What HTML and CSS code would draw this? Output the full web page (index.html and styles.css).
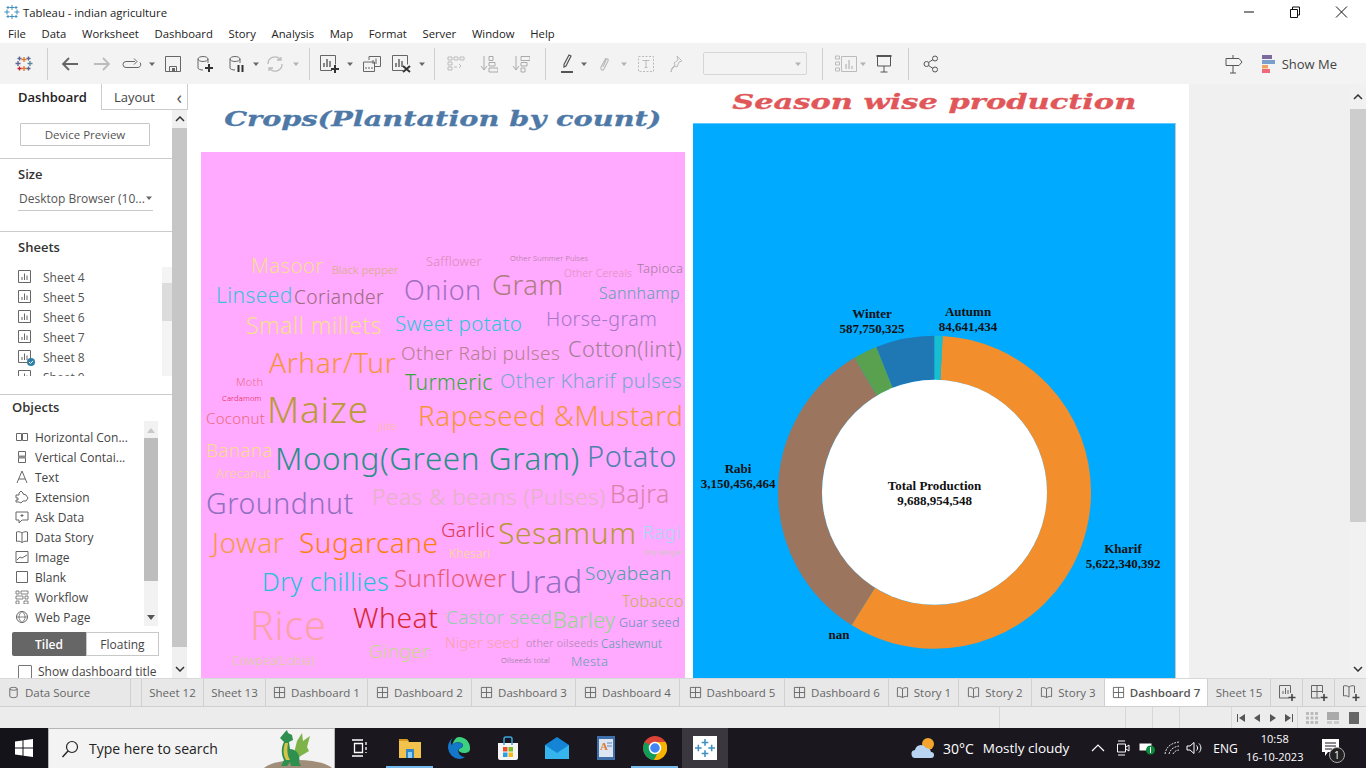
FILE: index.html
```html
<!DOCTYPE html>
<html lang="en">
<head>
    <meta charset="UTF-8">
    <title>Tableau - indian agriculture</title>
    <link rel="stylesheet" href="styles.css">
</head>
<body>
<svg class="sprite">
    <symbol id="i-sheet" viewBox="0 0 14 14"><path d="M.5.5h12v12H.5zM4 10V7M6.5 10V3.5M9 10V5.5" fill="none" stroke="#666"/></symbol>
    <symbol id="i-dash" viewBox="0 0 14 14"><path d="M1.5 1.5h11v11h-11zM7 1.5v11M1.5 7h11" fill="none" stroke="#666"/></symbol>
    <symbol id="i-story" viewBox="0 0 14 14"><path d="M7 3C5 1.500 3 1.500 1.500 2v9.500c1.500-.5 3.500-.5 5.500 1 2-1.500 4-1.500 5.500-1V2C11 1.500 9 1.500 7 3zM7 3v9.500" fill="none" stroke="#666"/></symbol>
    <symbol id="i-caret" viewBox="0 0 8 8"><path d="M1 2.500h6L4 6z" fill="#666"/></symbol>
    <symbol id="i-up" viewBox="0 0 10 6"><path d="M1 5l4-4 4 4" fill="none" stroke="#333" stroke-width="1.500"/></symbol>
    <symbol id="i-down" viewBox="0 0 10 6"><path d="M1 1l4 4 4-4" fill="none" stroke="#333" stroke-width="1.500"/></symbol>
</svg>

<div class="titlebar">
    <svg class="app-icon" viewBox="0 0 16 16"><path d="M8 1v5M5.500 3.500h5M8 10v5M5.500 12.500h5M3 5.500v5M.5 8h5M13 5.500v5M10.500 8h5M4 2v3M2.500 3.500h3M12 2v3M10.500 3.500h3M4 11v3M2.500 12.500h3M12 11v3M10.500 12.500h3" stroke="#3f8fc0" fill="none"/></svg>
    <span class="app-title">Tableau - indian agriculture</span>
    <div class="win-controls">
        <svg viewBox="0 0 46 24"><path d="M18 12h10" stroke="#111"/></svg>
        <svg viewBox="0 0 46 24"><path d="M18.500 9.500h7v8h-7zM20.500 9.500v-2.500h7v8h-2" fill="none" stroke="#111"/></svg>
        <svg viewBox="0 0 46 24"><path d="M18 6.500l11 11M29 6.500l-11 11" stroke="#111" fill="none"/></svg>
    </div>
</div>

<nav class="menubar">
    <span>File</span><span>Data</span><span>Worksheet</span><span>Dashboard</span><span>Story</span><span>Analysis</span><span>Map</span><span>Format</span><span>Server</span><span>Window</span><span>Help</span>
</nav>

<div class="toolbar">
    <div class="tool t47"><svg width="18" height="18" viewBox="0 0 18 18"><path d="M9 2v5M6.500 4.500h5M9 11v5M6.500 13.500h5" stroke="#e8762c" fill="none" stroke-width="1.300"/><path d="M3 6v5M.5 8.500h5" stroke="#5b6591" fill="none" stroke-width="1.300"/><path d="M15 6v5M12.500 8.500h5" stroke="#59879b" fill="none" stroke-width="1.300"/><path d="M4.500 11.500v4M2.500 13.500h4" stroke="#c72035" fill="none" stroke-width="1.300"/><path d="M13.500 11.500v4M11.500 13.500h4M4.500 1.500v4M2.500 3.500h4M13.500 1.500v4M11.500 3.500h4" stroke="#5b6591" fill="none" stroke-width="1.300"/></svg></div>
    <div class="sep"></div>
    <div class="t6"></div>
    <div class="tool t32"><svg width="18" height="14" viewBox="0 0 18 14"><path d="M17 7H2M8 1L2 7l6 6" fill="none" stroke="#666" stroke-width="1.800"/></svg></div>
    <div class="tool t32"><svg width="18" height="14" viewBox="0 0 18 14"><path d="M1 7h15M10 1l6 6-6 6" fill="none" stroke="#bbb" stroke-width="1.800"/></svg></div>
    <div class="tool t28"><svg width="20" height="12" viewBox="0 0 20 12"><path d="M13 3.500H4a3 3 0 0 0 0 6h12a3 3 0 0 0 2-5M12 .5l3 3-3 3" fill="none" stroke="#666"/></svg></div>
    <div class="tool t12"><svg class="caret"><use href="#i-caret"/></svg></div>
    <div class="tool t30"><svg width="16" height="16" viewBox="0 0 16 16"><path d="M.5.5h15v15H.5zM4.500 15.500v-5h7v5" fill="none" stroke="#666"/><path d="M7 12h3v3H7z" fill="#666"/></svg></div>
    <div class="tool t34"><svg width="18" height="18" viewBox="0 0 18 18"><path d="M2 4v9c0 1 2 2 5 2M2 4c0-1.500 2.500-2.500 5-2.500S12 2.500 12 4s-2.500 2.500-5 2.500S2 5.500 2 4zM12 4v4" fill="none" stroke="#666"/><path d="M13 9v8M9 13h8" stroke="#333" stroke-width="2"/></svg></div>
    <div class="tool t30"><svg width="18" height="18" viewBox="0 0 18 18"><path d="M2 4v9c0 1 2 2 5 2M2 4c0-1.500 2.500-2.500 5-2.500S12 2.500 12 4s-2.500 2.500-5 2.500S2 5.500 2 4zM12 4v4" fill="none" stroke="#666"/><path d="M10.500 10v7M14.500 10v7" stroke="#333" stroke-width="2"/></svg></div>
    <div class="tool t8"><svg class="caret"><use href="#i-caret"/></svg></div>
    <div class="tool t30"><svg width="18" height="16" viewBox="0 0 18 16"><path d="M2 8a7 7 0 0 1 12-5M16 8A7 7 0 0 1 4 13M11 4h4V1M7 12H3v3" fill="none" stroke="#bbb" stroke-width="1.300"/></svg></div>
    <div class="tool t12"><svg class="caret faded"><use href="#i-caret"/></svg></div>
    <div class="t7"></div>
    <div class="sep"></div>
    <div class="t4"></div>
    <div class="tool t32"><svg width="20" height="18" viewBox="0 0 20 18"><path d="M12 15.500H.5V.5h15v9" fill="none" stroke="#666"/><path d="M4 12V8M7 12V4M10 12V6" stroke="#666" stroke-width="1.500"/><path d="M15 10v8M11 14h8" stroke="#333" stroke-width="2"/></svg></div>
    <div class="tool t8"><svg class="caret"><use href="#i-caret"/></svg></div>
    <div class="tool t36"><svg width="18" height="16" viewBox="0 0 18 16"><path d="M6 4V.5h11.500v10H12M.5 6h11v9.500H.5zM10 8V4M13 8V2.500M3 13v-2M6 13v-2M9 13v-2" fill="none" stroke="#666"/></svg></div>
    <div class="tool t24"><svg width="20" height="18" viewBox="0 0 20 18"><path d="M11 15.500H.5V.5h15v9" fill="none" stroke="#666"/><path d="M4 12V8M7 12V4M10 12V6" stroke="#666" stroke-width="1.500"/><path d="M11 11l7 6M18 11l-7 6" stroke="#333" stroke-width="2"/></svg></div>
    <div class="tool t16"><svg class="caret"><use href="#i-caret"/></svg></div>
    <div class="t4"></div>
    <div class="sep"></div>
    <div class="tool t42"><svg width="18" height="16" viewBox="0 0 18 16"><path d="M1 1h4v3H1zM7 1h4v3H7zM13 1h4v3h-4zM1 6h4v3H1zM1 11h4v3H1zM7 11h3M12 8l2 2-2 2" fill="none" stroke="#bbb"/></svg></div>
    <div class="tool t24"><svg width="18" height="18" viewBox="0 0 18 18"><path d="M4 1v13M1 11l3 4 3-4" fill="none" stroke="#aaa"/><path d="M9 1.500h4v4H9zM9 7.500h6v3.500H9zM9 13h9v4H9z" fill="none" stroke="#aaa"/></svg></div>
    <div class="t4"></div>
    <div class="tool t32"><svg width="18" height="18" viewBox="0 0 18 18"><path d="M4 1v13M1 11l3 4 3-4" fill="none" stroke="#aaa"/><path d="M9 1.500h9v4H9zM9 7.500h6v3.500H9zM9 13h4v4H9z" fill="none" stroke="#aaa"/></svg></div>
    <div class="t8"></div>
    <div class="sep"></div>
    <div class="t8"></div>
    <div class="tool t26"><svg width="14" height="20" viewBox="0 0 14 20"><path d="M9 1l2 1-5 10-2 1 0-2.500z" fill="none" stroke="#555" stroke-width="1.200"/><path d="M1 17h12v2H1z" fill="#555"/></svg></div>
    <div class="tool t8"><svg class="caret"><use href="#i-caret"/></svg></div>
    <div class="tool t32"><svg width="12" height="18" viewBox="0 0 12 18"><path d="M8 3L3 12c-1 3 2 4 3 2l4-8c1-2-1-3-2-1l-3 7" fill="none" stroke="#bbb" stroke-width="1.200"/></svg></div>
    <div class="tool t8"><svg class="caret faded"><use href="#i-caret"/></svg></div>
    <div class="tool t36"><svg width="16" height="16" viewBox="0 0 16 16"><path d="M.5.5h15v15H.5z" fill="none" stroke="#bbb" stroke-dasharray="2 1.500"/><path d="M4.500 4.500h7M8 4.500v7M6.500 11.500h3" fill="none" stroke="#bbb"/></svg></div>
    <div class="tool t24"><svg width="14" height="18" viewBox="0 0 14 18"><path d="M8 1l5 5-3 1-2 5-2-1-3 3-1 3 1-4 3-3-1-2 4-3z" fill="none" stroke="#bbb"/></svg></div>
    <div class="t15"></div>
    <div class="select-box"><svg class="caret faded"><use href="#i-caret"/></svg></div>
    <div class="t15"></div>
    <div class="sep"></div>
    <div class="t10"></div>
    <div class="tool t26"><svg width="22" height="18" viewBox="0 0 22 18"><path d="M.5 1h4v3h-4zM.5 7h4v3h-4zM.5 13h4v3h-4zM6.500 1.500h15v15h-15z" fill="none" stroke="#bbb"/><path d="M11 14V9M14 14V5M17 14v-3" stroke="#aaa"/></svg></div>
    <div class="tool t8"><svg class="caret faded"><use href="#i-caret"/></svg></div>
    <div class="tool t34"><svg width="18" height="18" viewBox="0 0 18 18"><path d="M1.500 1h15" stroke="#555" stroke-width="2"/><path d="M2.500 2v9h13V2M9 11v6M5.500 17h7" fill="none" stroke="#555"/></svg></div>
    <div class="t7"></div>
    <div class="sep"></div>
    <div class="tool t44"><svg width="16" height="18" viewBox="0 0 16 18"><circle cx="3.500" cy="9" r="2.500" fill="none" stroke="#555"/><circle cx="12" cy="3.500" r="2.500" fill="none" stroke="#555"/><circle cx="12" cy="14.500" r="2.500" fill="none" stroke="#555"/><path d="M5.500 7.500l4.500-3M5.500 10.500l4.500 3" stroke="#555"/></svg></div>
    <div class="toolbar-right">
        <svg width="20" height="20" viewBox="0 0 20 20"><path d="M2 4.500h13l3 3.500-3 3.500H2zM9 1v3M9 11.500V19M6 19h6" fill="none" stroke="#555"/></svg>
        <div class="showme"><svg width="13" height="18" viewBox="0 0 13 18"><path d="M0 0h10v4H0z" fill="#7b6a9b"/><path d="M0 5h13v4H0z" fill="#7a9fcf"/><path d="M0 10h6v3.500H0z" fill="#f2a25c"/><path d="M0 14h8v4H0z" fill="#ee6a7a"/></svg><span>Show Me</span></div>
    </div>
</div>

<div class="main">
    <aside class="sidebar">
        <div class="side-tabs">
            <div class="side-tab active">Dashboard</div>
            <div class="side-tab">Layout<span class="collapse">&#8249;</span></div>
        </div>
        <div class="side-body">
            <section class="device"><button class="device-btn">Device Preview</button></section>
            <section class="size">
                <h4>Size</h4>
                <div class="size-select"><span>Desktop Browser (10...</span><svg class="caret"><use href="#i-caret"/></svg></div>
            </section>
            <section class="sheets">
                <h4>Sheets</h4>
                <div class="list-wrap sheet-list">
                    <ul>
                        <li><svg class="ic"><use href="#i-sheet"/></svg>Sheet 4</li>
                        <li><svg class="ic"><use href="#i-sheet"/></svg>Sheet 5</li>
                        <li><svg class="ic"><use href="#i-sheet"/></svg>Sheet 6</li>
                        <li><svg class="ic"><use href="#i-sheet"/></svg>Sheet 7</li>
                        <li><svg class="ic"><use href="#i-sheet"/></svg><svg class="check" viewBox="0 0 8 8"><circle cx="4" cy="4" r="4" fill="#2f7ea8"/><path d="M2 4l1.500 1.500L6 2.800" fill="none" stroke="#fff"/></svg>Sheet 8</li>
                        <li><svg class="ic"><use href="#i-sheet"/></svg>Sheet 9</li>
                    </ul>
                    <div class="mini-scroll"><div class="mini-thumb"></div></div>
                </div>
            </section>
            <section class="objects">
                <h4>Objects</h4>
                <div class="object-list">
                    <ul>
                        <li><svg class="ob" viewBox="0 0 14 14"><path d="M1.500 3.500h5v7h-5zM7.500 3.500h5v7h-5z" fill="none" stroke="#666"/></svg>Horizontal Con...</li>
                        <li><svg class="ob" viewBox="0 0 14 14"><path d="M3.500 1.500h7v5h-7zM3.500 7.500h7v5h-7z" fill="none" stroke="#666"/><path d="M3.500 5.500h7v3h-7z" fill="#888"/></svg>Vertical Contai...</li>
                        <li><svg class="ob" viewBox="0 0 14 14"><path d="M2 13L7 1l5 12M4 9h6" fill="none" stroke="#666"/></svg>Text</li>
                        <li><svg class="ob" viewBox="0 0 14 14"><path d="M1 5h3V3l2-2 2 2v1l3 1 2 3-2 3H8l-2 2-2-1H1v-2h2V8H1z" fill="none" stroke="#666"/></svg>Extension</li>
                        <li><svg class="ob" viewBox="0 0 14 14"><path d="M1 2h12v8H7l-3 3v-3H1zM7 4v3M5.500 5.500h3" fill="none" stroke="#666"/></svg>Ask Data</li>
                        <li><svg class="ob" viewBox="0 0 14 14"><use href="#i-story"/></svg>Data Story</li>
                        <li><svg class="ob" viewBox="0 0 14 14"><path d="M1 1.500h12v11H1zM2 10l3-3 2 1 5-3" fill="none" stroke="#666"/></svg>Image</li>
                        <li><svg class="ob" viewBox="0 0 14 14"><path d="M1.500 1.500h11v11h-11z" fill="none" stroke="#666"/></svg>Blank</li>
                        <li><svg class="ob" viewBox="0 0 14 14"><path d="M1 1h3v3H1zM6 1h7v3H6zM1 6h7v3H1zM10 6h3v3h-3zM1 11h3v3H1zM9 11h4v3H9z" fill="none" stroke="#666" stroke-width=".8"/></svg>Workflow</li>
                        <li><svg class="ob" viewBox="0 0 14 14"><circle cx="7" cy="7" r="5.500" fill="none" stroke="#666"/><path d="M1.500 7h11M7 1.500c-4 3-4 8 0 11M7 1.500c4 3 4 8 0 11" fill="none" stroke="#666" stroke-width=".8"/></svg>Web Page</li>
                    </ul>
                    <div class="ob-scroll"><span class="ob-up"></span><div class="ob-thumb"></div><span class="ob-down"></span></div>
                </div>
                <div class="tile-toggle"><span class="tiled">Tiled</span><span class="floating">Floating</span></div>
                <label class="show-title"><span class="box"></span>Show dashboard title</label>
            </section>
        </div>
        <div class="side-scroll"><svg class="arrow"><use href="#i-up"/></svg><div class="side-thumb"></div><svg class="arrow"><use href="#i-down"/></svg></div>
    </aside>

    <div class="canvas-area">
        <div class="dashboard">
            <div class="left-col">
                <div class="title-left"><span class="wide-title">Crops(Plantation by count)</span></div>
                <div class="cloud">
                    <span class="word w-masoor">Masoor</span>
                    <span class="word w-pepper">Black pepper</span>
                    <span class="word w-safflower">Safflower</span>
                    <span class="word w-summer">Other Summer Pulses</span>
                    <span class="word w-cereals">Other Cereals</span>
                    <span class="word w-tapioca">Tapioca</span>
                    <span class="word w-linseed">Linseed</span>
                    <span class="word w-coriander">Coriander</span>
                    <span class="word w-onion">Onion</span>
                    <span class="word w-gram">Gram</span>
                    <span class="word w-sannhamp">Sannhamp</span>
                    <span class="word w-millets">Small millets</span>
                    <span class="word w-sweet">Sweet potato</span>
                    <span class="word w-horse">Horse-gram</span>
                    <span class="word w-arhar">Arhar/Tur</span>
                    <span class="word w-rabi">Other Rabi pulses</span>
                    <span class="word w-cotton">Cotton(lint)</span>
                    <span class="word w-moth">Moth</span>
                    <span class="word w-cardamom">Cardamom</span>
                    <span class="word w-turmeric">Turmeric</span>
                    <span class="word w-kharif">Other Kharif pulses</span>
                    <span class="word w-maize">Maize</span>
                    <span class="word w-coconut">Coconut</span>
                    <span class="word w-jute">Jute</span>
                    <span class="word w-rapeseed">Rapeseed &amp;Mustard</span>
                    <span class="word w-banana">Banana</span>
                    <span class="word w-moong">Moong(Green Gram)</span>
                    <span class="word w-potato">Potato</span>
                    <span class="word w-arecanut">Arecanut</span>
                    <span class="word w-groundnut">Groundnut</span>
                    <span class="word w-peas">Peas &amp; beans (Pulses)</span>
                    <span class="word w-bajra">Bajra</span>
                    <span class="word w-garlic">Garlic</span>
                    <span class="word w-sesamum">Sesamum</span>
                    <span class="word w-ragi">Ragi</span>
                    <span class="word w-dryginger">Dry Ginger</span>
                    <span class="word w-jowar">Jowar</span>
                    <span class="word w-sugarcane">Sugarcane</span>
                    <span class="word w-khesari">Khesari</span>
                    <span class="word w-chillies">Dry chillies</span>
                    <span class="word w-sunflower">Sunflower</span>
                    <span class="word w-urad">Urad</span>
                    <span class="word w-soyabean">Soyabean</span>
                    <span class="word w-tobacco">Tobacco</span>
                    <span class="word w-rice">Rice</span>
                    <span class="word w-wheat">Wheat</span>
                    <span class="word w-castor">Castor seed</span>
                    <span class="word w-barley">Barley</span>
                    <span class="word w-guar">Guar seed</span>
                    <span class="word w-niger">Niger seed</span>
                    <span class="word w-oilseeds">other oilseeds</span>
                    <span class="word w-cashew">Cashewnut</span>
                    <span class="word w-ginger">Ginger</span>
                    <span class="word w-cowpea">Cowpea(Lobia)</span>
                    <span class="word w-oiltotal">Oilseeds total</span>
                    <span class="word w-mesta">Mesta</span>
                </div>
            </div>
            <div class="right-col">
                <div class="title-right"><span class="wide-title">Season wise production</span></div>
                <div class="donut-panel">
                    <svg class="donut" viewBox="0 0 483 554">
                        <g transform="rotate(-90 241.500 368.300)" fill="none" stroke-width="44">
                            <circle cx="241.500" cy="368.300" r="134.500" pathLength="360" stroke="#f28e2b" stroke-dasharray="209 151" stroke-dashoffset="-3"/>
                            <circle cx="241.500" cy="368.300" r="134.500" pathLength="360" stroke="#9c755f" stroke-dasharray="117.200 242.800" stroke-dashoffset="-212"/>
                            <circle cx="241.500" cy="368.300" r="134.500" pathLength="360" stroke="#59a14f" stroke-dasharray="9 351" stroke-dashoffset="-329.200"/>
                            <circle cx="241.500" cy="368.300" r="134.500" pathLength="360" stroke="#1f77b4" stroke-dasharray="21.800 338.200" stroke-dashoffset="-338.200"/>
                            <circle cx="241.500" cy="368.300" r="134.500" pathLength="360" stroke="#17becf" stroke-dasharray="3 357"/>
                        </g>
                        <circle cx="241.500" cy="368.300" r="112.500" fill="#fff"/>
                        <g class="donut-label">
                            <text x="179" y="194">Winter</text><text x="179" y="209">587,750,325</text>
                            <text x="275" y="192">Autumn</text><text x="275" y="207">84,641,434</text>
                            <text x="45" y="349">Rabi</text><text x="45" y="364">3,150,456,464</text>
                            <text x="241.500" y="366">Total Production</text><text x="241.500" y="381">9,688,954,548</text>
                            <text x="430" y="429">Kharif</text><text x="430" y="444">5,622,340,392</text>
                            <text x="146" y="515">nan</text>
                        </g>
                    </svg>
                </div>
            </div>
        </div>
        <div class="main-scroll"><svg class="arrow"><use href="#i-up"/></svg><div class="main-thumb"></div><svg class="arrow"><use href="#i-down"/></svg></div>
    </div>
</div>

<div class="tabs">
    <div class="tab tab-source"><svg class="tab-ic" viewBox="0 0 14 14"><path d="M3 3v8c0 2 8 2 8 0V3c0-2-8-2-8 0zM3 3c0 2 8 2 8 0" fill="none" stroke="#666"/></svg>Data Source</div>
    <div class="tab tab-gap"></div>
    <div class="tab w62">Sheet 12</div>
    <div class="tab w62">Sheet 13</div>
    <div class="tab w102"><svg class="tab-ic"><use href="#i-dash"/></svg>Dashboard 1</div>
    <div class="tab w104"><svg class="tab-ic"><use href="#i-dash"/></svg>Dashboard 2</div>
    <div class="tab w104"><svg class="tab-ic"><use href="#i-dash"/></svg>Dashboard 3</div>
    <div class="tab w104"><svg class="tab-ic"><use href="#i-dash"/></svg>Dashboard 4</div>
    <div class="tab w105"><svg class="tab-ic"><use href="#i-dash"/></svg>Dashboard 5</div>
    <div class="tab w104"><svg class="tab-ic"><use href="#i-dash"/></svg>Dashboard 6</div>
    <div class="tab w70"><svg class="tab-ic"><use href="#i-story"/></svg>Story 1</div>
    <div class="tab w73"><svg class="tab-ic"><use href="#i-story"/></svg>Story 2</div>
    <div class="tab w73"><svg class="tab-ic"><use href="#i-story"/></svg>Story 3</div>
    <div class="tab tab-active"><svg class="tab-ic"><use href="#i-dash"/></svg>Dashboard 7</div>
    <div class="tab w63">Sheet 15</div>
    <div class="tab w32"><svg class="add-ic" viewBox="0 0 18 18"><path d="M11 14H1.500V1.500h11V9M5 10V7M7.500 10V4M10 10V6" fill="none" stroke="#666"/><path d="M14 10v7M10.500 13.500h7" stroke="#444" stroke-width="1.600"/></svg></div>
    <div class="tab w32"><svg class="add-ic" viewBox="0 0 18 18"><path d="M10 14H1.500V1.500h11V9M7 1.500V14M1.500 7.500h11" fill="none" stroke="#666"/><path d="M14 10v7M10.500 13.500h7" stroke="#444" stroke-width="1.600"/></svg></div>
    <div class="tab wrest"><svg class="add-ic" viewBox="0 0 18 18"><path d="M7 3C5 1.500 3 1.500 1.500 2v10c1.500-.5 3.500-.5 5.500 1M7 3c2-1.500 4-1.500 5.500-1v7M7 3v10" fill="none" stroke="#666"/><path d="M14 10v7M10.500 13.500h7" stroke="#444" stroke-width="1.600"/></svg></div>
</div>

<div class="statusbar">
    <div class="st st1000"></div>
    <div class="st st126"></div>
    <div class="st st27"></div>
    <div class="st st27"></div>
    <div class="st st52"></div>
    <div class="st st66 pager">
        <svg viewBox="0 0 10 10"><path d="M1.500 1v8" stroke="#555"/><path d="M9 1v8L3 5z" fill="#555"/></svg>
        <svg viewBox="0 0 10 10"><path d="M8 1v8L2 5z" fill="#555"/></svg>
        <svg viewBox="0 0 10 10"><path d="M2 1v8l6-4z" fill="#555"/></svg>
        <svg viewBox="0 0 10 10"><path d="M8.500 1v8" stroke="#555"/><path d="M1 1v8l6-4z" fill="#555"/></svg>
    </div>
    <div class="views">
        <svg viewBox="0 0 12 12"><path d="M0 0h3v3H0zM4.500 0h3v3h-3zM9 0h3v3H9zM0 4.500h3v3H0zM4.500 4.500h3v3h-3zM9 4.500h3v3H9zM0 9h3v3H0zM4.500 9h3v3h-3zM9 9h3v3H9z" fill="#bbb"/></svg>
        <svg viewBox="0 0 12 12"><path d="M0 0h12v8H0z" fill="#aaa"/><path d="M0 9h5v3H0zM7 9h5v3H7z" fill="#ccc"/></svg>
        <svg viewBox="0 0 12 12"><path d="M1 0h10v12H1z" fill="#666"/></svg>
    </div>
</div>

<footer class="taskbar">
    <div class="start"><svg width="18" height="18" viewBox="0 0 18 18"><path d="M0 2.500l7.500-1v7H0zM8.500 1.300L18 0v8.500H8.500zM0 9.500h7.500v7l-7.500-1zM8.500 9.500H18V18l-9.500-1.300z" fill="#fff"/></svg></div>
    <div class="search">
        <svg width="18" height="18" viewBox="0 0 18 18"><circle cx="11" cy="7" r="5.500" fill="none" stroke="#222" stroke-width="1.200"/><path d="M7 11l-5.500 6" stroke="#222" stroke-width="1.400"/></svg>
        <span>Type here to search</span>
        <svg class="dragon" viewBox="0 0 74 40">
            <ellipse cx="37" cy="44" rx="37" ry="13" fill="#a08d7a"/>
            <path d="M33 24L36 12l5-8 1 8 7-5-3 11 2 4-10 6z" fill="#7db348"/>
            <path d="M19 9l5-6 2-2 1 3 4 2 1 5-4 2 1 7c6 0 11 6 9 13l2 4H30l-1-4-3 4h-6l3-6c-3-5-3-13 0-18z" fill="#2f8f4e"/>
            <path d="M24 14c-2 6-2 12 1 17h4c-3-5-3-11-2-17z" fill="#d7c24a"/>
        </svg>
    </div>
    <div class="task-icons">
        <div class="task t-view"><svg width="16" height="18" viewBox="0 0 16 18"><path d="M0 1h11M2.500 4.500h8v9h-8zM0 17h11M14 3v3M14 8v3M14 13v1" fill="none" stroke="#fff" stroke-width="1.300"/></svg></div>
        <div class="task open"><svg width="24" height="22" viewBox="0 0 24 22"><path d="M1 2h8l2 3h12v16H1z" fill="#f2c24c"/><path d="M1 2h8l2 2H1z" fill="#d99a22"/><path d="M8 12h8v9H8z" fill="#2f86c8"/><path d="M10 15h4v6h-4z" fill="#8ed0f4"/></svg></div>
        <div class="task"><svg width="24" height="24" viewBox="0 0 24 24"><path d="M12 1a11 11 0 0 1 11 12c0 3-3 4-6 4-4 0-6-2-5-4 1-1 4-1 4-4-1-3-7-4-11 0C7 4 9 1 12 1z" fill="#3dd07f"/><path d="M5 9c4-4 10-3 11 0 0 3-3 3-4 4-2 3 1 8 6 8a11 11 0 0 1-6 2A12 12 0 0 1 1 12C1 7 3 4 6 2 4 4 3 7 5 9z" fill="#1477c9"/></svg></div>
        <div class="task"><svg width="22" height="24" viewBox="0 0 22 24"><path d="M1 7h20v15a2 2 0 0 1-2 2H3a2 2 0 0 1-2-2z" fill="#f5f5f5"/><path d="M7 9V3a2 2 0 0 1 2-2h4a2 2 0 0 1 2 2v6" fill="none" stroke="#3aa7e0" stroke-width="1.500"/><path d="M6 11h4.500v4.500H6z" fill="#e8502a"/><path d="M11.500 11H16v4.500h-4.500z" fill="#7cbb28"/><path d="M6 16.500h4.500V21H6z" fill="#2c9fe0"/><path d="M11.500 16.500H16V21h-4.500z" fill="#f7b818"/></svg></div>
        <div class="task"><svg width="24" height="22" viewBox="0 0 24 22"><path d="M0 8l12-8 12 8v14H0z" fill="#1484d4"/><path d="M0 8l12 8 12-8v14H0z" fill="#35b4ee"/></svg></div>
        <div class="task"><svg width="20" height="26" viewBox="0 0 20 26"><path d="M1 1h18v24H1z" fill="#3f6fa8"/><path d="M3 4h14v18H3z" fill="#dce6f2"/><text class="doc-a" x="4" y="15">A</text><path d="M11 8h5M11 11h5" stroke="#5b86c0"/></svg></div>
        <div class="task open"><svg width="24" height="24" viewBox="0 0 24 24"><circle cx="12" cy="12" r="12" fill="#db4437"/><path d="M12 12L1.600 6 0 12a12 12 0 0 0 11 12l6-12z" fill="#0f9d58"/><path d="M12 6h10.500A12 12 0 0 1 11 24l6-12z" fill="#f4b400"/><circle cx="12" cy="12" r="5.500" fill="#4285f4" stroke="#fff" stroke-width="1.500"/></svg></div>
        <div class="task tableau"><svg width="18" height="18" viewBox="0 0 18 18"><path d="M9 1v6M6 4h6M9 11v6M6 14h6M3 6v6M0 9h6M15 6v6M12 9h6" stroke="#3f8fc0" fill="none" stroke-width="1.400"/></svg></div>
    </div>
    <div class="tray">
        <svg class="weather" width="26" height="24" viewBox="0 0 26 24"><circle cx="17" cy="8" r="6" fill="#f3a42c"/><path d="M5 22a4 4 0 0 1-1-8 6 6 0 0 1 11-2 5 5 0 0 1 5 4 3 3 0 0 1 0 6z" fill="#b8d4f0"/></svg>
        <span class="temp">30°C</span>
        <span class="cond">Mostly cloudy</span>
        <svg class="tr-up" width="14" height="8" viewBox="0 0 14 8"><path d="M1 7l6-6 6 6" fill="none" stroke="#fff" stroke-width="1.200"/></svg>
        <svg class="tr-meet" width="14" height="16" viewBox="0 0 14 16"><path d="M1.500 4h8v8h-8zM2 1h7M2 15h7M10 7l3-2v6l-3-2" fill="none" stroke="#fff"/></svg>
        <svg class="tr-bat" width="16" height="14" viewBox="0 0 16 14"><path d="M.5 2.500h12v7H.5z" fill="#fff"/><circle cx="11.500" cy="9" r="4.500" fill="#0a8a3a"/><path d="M11.500 6v6" stroke="#fff"/></svg>
        <svg class="tr-wifi" width="16" height="14" viewBox="0 0 16 14"><path d="M1 13C2 6 7 2 15 1M5 13c1-4 4-7 10-8M9 13c1-2 3-4 6-4" fill="none" stroke="#ddd" stroke-dasharray="2 1"/></svg>
        <svg class="tr-vol" width="16" height="14" viewBox="0 0 16 14"><path d="M1 5h3l4-3.500v11L4 9H1zM10.500 4.500c1.500 1.500 1.500 3.500 0 5M13 2.500c2.500 2.500 2.500 6.500 0 9" fill="none" stroke="#fff"/></svg>
        <span class="lang">ENG</span>
        <div class="clock"><span>10:58</span><span>16-10-2023</span></div>
        <div class="notif"><svg width="20" height="18" viewBox="0 0 20 18"><path d="M1 0h17v13H7l-3 4v-4H1z" fill="#fff"/><path d="M4 4h11M4 7h11M4 10h7" stroke="#1b171f"/></svg><span class="badge">1</span></div>
    </div>
</footer>
</body>
</html>
```
FILE: styles.css
```css
* {
    box-sizing: border-box;
}
html, body {
    margin: 0;
    padding: 0;
    height: 768px;
    overflow: hidden;
    background: #fff;
}
body {
    width: 1366px;
    font-family: "Open Sans", "Noto Sans", sans-serif;
    font-size: 12px;
    color: #222;
    display: flex;
    flex-direction: column;
}
.sprite {
    display: none;
}
ul {
    list-style: none;
    margin: 0;
    padding: 0;
}
h4 {
    margin: 0;
    font-size: 13px;
    font-weight: 600;
    color: #333;
}

/* title + menu */
.titlebar {
    height: 24px;
    display: flex;
    align-items: center;
    padding-left: 4px;
    flex: none;
}
.app-icon {
    width: 16px;
    height: 16px;
}
.app-title {
    margin-left: 3px;
    font-size: 11.300px;
    color: #222;
}
.win-controls {
    margin-left: auto;
    display: flex;
    margin-right: 2px;
}
.win-controls svg {
    width: 46px;
    height: 24px;
}
.menubar {
    height: 19px;
    display: flex;
    align-items: center;
    padding-left: 8px;
    gap: 15.700px;
    flex: none;
    font-size: 11.300px;
    color: #222;
}

/* toolbar */
.toolbar {
    height: 41px;
    background: #f3f3f3;
    display: flex;
    align-items: center;
    flex: none;
}
.tool {
    display: flex;
    align-items: center;
    justify-content: center;
    flex: none;
    height: 24px;
}
.sep {
    width: 1px;
    height: 32px;
    background: #cfcfcf;
    flex: none;
}
.caret {
    width: 8px;
    height: 8px;
    flex: none;
}
.faded {
    opacity: .45;
}
.t4 { width: 4px; flex: none; }
.t6 { width: 6px; flex: none; }
.t7 { width: 7px; flex: none; }
.t8 { width: 8px; flex: none; }
.t10 { width: 10px; flex: none; }
.t12 { width: 12px; flex: none; }
.t15 { width: 15px; flex: none; }
.t16 { width: 16px; }
.t24 { width: 24px; }
.t26 { width: 26px; }
.t28 { width: 28px; }
.t30 { width: 30px; }
.t32 { width: 32px; }
.t34 { width: 34px; }
.t36 { width: 36px; }
.t42 { width: 42px; }
.t44 { width: 44px; }
.t47 { width: 47px; }
.select-box {
    width: 104px;
    height: 23px;
    border: 1px solid #d6d6d6;
    border-radius: 2px;
    display: flex;
    align-items: center;
    justify-content: flex-end;
    padding-right: 4px;
    flex: none;
}
.toolbar-right {
    margin-left: auto;
    display: flex;
    align-items: center;
    gap: 18px;
    padding-right: 29px;
}
.showme {
    display: flex;
    align-items: center;
    gap: 7px;
    font-size: 13px;
    color: #444;
}

/* main */
.main {
    height: 594px;
    display: flex;
    flex: none;
    overflow: hidden;
}
.sidebar {
    width: 190px;
    flex: none;
    position: relative;
    background: #fff;
    display: flex;
    flex-wrap: wrap;
    align-content: flex-start;
    overflow: hidden;
}
.side-tabs {
    width: 188px;
    height: 26px;
    display: flex;
    flex: none;
}
.side-tab {
    display: flex;
    align-items: center;
    font-size: 13px;
    color: #444;
    height: 26px;
}
.side-tab.active {
    width: 102px;
    padding-left: 18px;
    font-weight: 600;
    color: #222;
    border-right: 1px solid #ccc;
}
.side-tab:not(.active) {
    flex: 1;
    padding-left: 12px;
    border-right: 1px solid #ccc;
    border-bottom: 1px solid #ccc;
    position: relative;
}
.collapse {
    margin-left: auto;
    margin-right: 5px;
    font-size: 18px;
    line-height: 1;
    color: #555;
}
.side-body {
    width: 172px;
    height: 568px;
    overflow: hidden;
}
.side-scroll {
    width: 15px;
    height: 568px;
    display: flex;
    flex-direction: column;
    align-items: center;
    background: #f0f0f0;
}
.arrow {
    width: 10px;
    height: 6px;
    flex: none;
    margin: 6px 0;
}
.side-thumb {
    width: 15px;
    height: 522px;
    background: #c6c6c6;
    margin-bottom: 13px;
}
.side-body section {
    border-bottom: 1px solid #ccc;
}
.device {
    height: 49px;
    padding: 13px 0 0 20px;
}
.device-btn {
    width: 130px;
    height: 23px;
    background: #fff;
    border: 1px solid #c6c6c6;
    border-radius: 1px;
    font: 11.500px/20px "Open Sans", sans-serif;
    color: #555;
    padding: 0;
}
.size {
    height: 73px;
    padding: 6px 18px 0;
}
.size-select {
    width: 135px;
    height: 25px;
    margin-top: 3px;
    display: flex;
    align-items: center;
    justify-content: space-between;
    border-bottom: 1px solid #c8c8c8;
    font-size: 12px;
    color: #555;
    padding-left: 1px;
}
.sheets {
    height: 163px;
    padding: 6px 0 0 18px;
}
.list-wrap {
    margin-top: 11px;
    height: 109px;
    position: relative;
    overflow: hidden;
}
.sheet-list li {
    height: 20px;
    display: flex;
    align-items: center;
    font-size: 12px;
    color: #555;
    position: relative;
}
.ic {
    width: 14px;
    height: 14px;
    margin-right: 11px;
    flex: none;
}
.check {
    position: absolute;
    left: 9px;
    top: 11px;
    width: 8px;
    height: 8px;
}
.mini-scroll {
    position: absolute;
    right: 0;
    top: 0;
    width: 10px;
    height: 109px;
    background: #f4f4f4;
}
.mini-thumb {
    margin-top: 16px;
    height: 38px;
    background: #dcdcdc;
}
.objects {
    padding: 3px 0 0 12px;
    border-bottom: 0 !important;
}
.object-list {
    width: 147px;
    height: 205px;
    margin-top: 5px;
    position: relative;
}
.object-list li {
    height: 20px;
    display: flex;
    align-items: center;
    font-size: 12px;
    color: #444;
    padding-left: 3px;
}
.object-list ul {
    padding-top: 6px;
}
.ob {
    width: 14px;
    height: 14px;
    margin-right: 6px;
    flex: none;
}
.ob-scroll {
    position: absolute;
    right: 1px;
    top: 0;
    width: 14px;
    height: 205px;
    background: #f2f2f2;
}
.ob-up {
    position: absolute;
    left: 3px;
    top: 7px;
    border: 4px solid transparent;
    border-top: 0;
    border-bottom: 5px solid #c8c8c8;
}
.ob-down {
    position: absolute;
    left: 3px;
    bottom: 6px;
    border: 4px solid transparent;
    border-bottom: 0;
    border-top: 5px solid #555;
}
.ob-thumb {
    position: absolute;
    left: 0;
    top: 17px;
    width: 14px;
    height: 143px;
    background: #bdbdbd;
}
.tile-toggle {
    width: 147px;
    height: 24px;
    margin-top: 6px;
    display: flex;
    font-size: 12px;
}
.tiled {
    width: 74px;
    background: #666;
    color: #fff;
    font-weight: 600;
    border-radius: 2px 0 0 2px;
    display: flex;
    align-items: center;
    justify-content: center;
}
.floating {
    flex: 1;
    border: 1px solid #c8c8c8;
    color: #444;
    display: flex;
    align-items: center;
    justify-content: center;
}
.show-title {
    display: flex;
    align-items: center;
    margin-top: 7px;
    padding-left: 6px;
    font-size: 12px;
    color: #444;
    white-space: nowrap;
}
.box {
    width: 14px;
    height: 14px;
    border: 1px solid #777;
    border-radius: 1px;
    margin-right: 6px;
}

/* dashboard */
.canvas-area {
    flex: 1;
    display: flex;
    background: #f0f0f0;
}
.dashboard {
    width: 999px;
    background: #fff;
    display: flex;
    padding-left: 11px;
    gap: 8px;
}
.left-col {
    width: 484px;
    display: flex;
    flex-direction: column;
}
.right-col {
    width: 483px;
    display: flex;
    flex-direction: column;
}
.title-left {
    height: 68px;
    padding-top: 20px;
    text-align: center;
    font-size: 21px;
    line-height: 28px;
    color: #4e79a7;
}
.title-right {
    height: 40px;
    padding-top: 3px;
    text-align: center;
    font-size: 21px;
    line-height: 28px;
    color: #e15759;
}
.wide-title {
    display: inline-block;
    font-family: "DejaVu Serif", serif;
    font-weight: 700;
    font-style: italic;
    white-space: nowrap;
    -webkit-text-stroke: .3px currentColor;
}
.title-left .wide-title {
    transform: scaleX(1.368);
}
.title-right .wide-title {
    transform: scaleX(1.451);
}
.cloud {
    flex: 1;
    position: relative;
    background: #ffa9ff;
    overflow: hidden;
}
.donut-panel {
    flex: 1;
    background: #00aaff;
    border-top: 1px solid #5cc8ff;
    border-right: 1px solid #c8c8c8;
}
.donut {
    display: block;
    width: 483px;
    height: 554px;
}
.donut-label text {
    font-family: "Liberation Serif", serif;
    font-weight: 700;
    font-size: 13px;
    text-anchor: middle;
    fill: #111;
}
.main-scroll {
    width: 16px;
    margin-left: auto;
    display: flex;
    flex-direction: column;
    align-items: center;
    background: #f1f1f1;
}
.main-scroll .arrow:first-child {
    margin-top: 10px;
}
.main-thumb {
    width: 16px;
    height: 413px;
    margin-top: 3px;
    background: #cdcdcd;
    margin-bottom: auto;
}

/* word cloud, each word sits at its own place on the canvas */
.word {
    position: absolute;
    top: calc(var(--b) + 1px - .388em);
    line-height: 0;
    white-space: nowrap;
    font-family: "Noto Sans", sans-serif;
    font-weight: 300;
    letter-spacing: .019em;
}
.w-masoor { left: 50px; --b: 120px; font-size: 20.400px; color: #f7df8c; }
.w-pepper { left: 131px; --b: 121px; font-size: 10.800px; color: #d2b06a; }
.w-safflower { left: 225px; --b: 113px; font-size: 12.800px; color: #d98bb0; }
.w-summer { left: 309px; --b: 108px; font-size: 7.600px; color: #a97a90; }
.w-cereals { left: 363px; --b: 124px; font-size: 10.500px; color: #e48fb5; }
.w-tapioca { left: 436px; --b: 120px; font-size: 13px; color: #a67c9e; }
.w-linseed { left: 15px; --b: 150px; font-size: 21px; color: #3cc0dc; }
.w-coriander { left: 93px; --b: 151px; font-size: 19.200px; color: #9c6b7e; }
.w-onion { left: 203px; --b: 147px; font-size: 27px; color: #a070c0; }
.w-gram { left: 291px; --b: 143px; font-size: 27.500px; color: #ad7d80; }
.w-sannhamp { left: 398px; --b: 146px; font-size: 16px; color: #5fa0ae; }
.w-millets { left: 45px; --b: 181px; font-size: 23px; color: #f8e08a; }
.w-sweet { left: 194px; --b: 178px; font-size: 20.500px; color: #2fc4dc; }
.w-horse { left: 345px; --b: 174px; font-size: 19.700px; color: #a678c8; }
.w-arhar { left: 68px; --b: 220px; font-size: 28.200px; color: #f7943a; }
.w-rabi { left: 200px; --b: 207px; font-size: 19px; color: #b58090; }
.w-cotton { left: 367px; --b: 204px; font-size: 21.700px; color: #a07f94; }
.w-moth { left: 35px; --b: 233px; font-size: 11px; color: #ee6e8a; }
.w-cardamom { left: 21px; --b: 248px; font-size: 7.600px; color: #e8203f; }
.w-turmeric { left: 204px; --b: 237px; font-size: 21px; color: #35a83c; }
.w-kharif { left: 299px; --b: 236px; font-size: 20px; color: #78a8d0; }
.w-maize { left: 66px; --b: 270px; font-size: 37px; color: #bb9a3a; }
.w-coconut { left: 5px; --b: 271px; font-size: 15px; color: #ea6c80; }
.w-jute { left: 177px; --b: 277px; font-size: 10px; color: #f7c48a; }
.w-rapeseed { left: 217px; --b: 273px; font-size: 27.800px; color: #f7943a; }
.w-banana { left: 5px; --b: 304px; font-size: 18.800px; color: #f8dd85; }
.w-moong { left: 74px; --b: 317px; font-size: 31.400px; color: #2a8f88; }
.w-potato { left: 386px; --b: 314px; font-size: 29px; color: #4f81ad; }
.w-arecanut { left: 15px; --b: 325px; font-size: 13px; color: #f8d98a; }
.w-groundnut { left: 5px; --b: 361px; font-size: 28.500px; color: #9070c0; }
.w-peas { left: 171px; --b: 353px; font-size: 22.800px; color: #e2b3c0; }
.w-bajra { left: 409px; --b: 350px; font-size: 24.800px; color: #dc80a8; }
.w-garlic { left: 240px; --b: 385px; font-size: 20px; color: #dc3c58; }
.w-sesamum { left: 297px; --b: 392px; font-size: 30px; color: #b99838; }
.w-ragi { left: 441px; --b: 386px; font-size: 19px; color: #a8d8f0; }
.w-dryginger { left: 443px; --b: 402px; font-size: 7.600px; color: #b5d79a; }
.w-jowar { left: 11px; --b: 400px; font-size: 28px; color: #f79a45; }
.w-sugarcane { left: 98px; --b: 400px; font-size: 28px; color: #ff7f0e; }
.w-khesari { left: 248px; --b: 405px; font-size: 11.800px; color: #fde27a; }
.w-chillies { left: 61px; --b: 438px; font-size: 25px; color: #25c0dc; }
.w-sunflower { left: 193px; --b: 434px; font-size: 24px; color: #e85c70; }
.w-urad { left: 308px; --b: 440px; font-size: 32px; color: #9670c0; }
.w-soyabean { left: 384px; --b: 427px; font-size: 19px; color: #4fa0a8; }
.w-tobacco { left: 421px; --b: 454px; font-size: 16px; color: #c8b050; }
.w-rice { left: 49px; --b: 487px; font-size: 39.500px; color: #fba2a8; }
.w-wheat { left: 152px; --b: 475px; font-size: 28.300px; color: #d62830; }
.w-castor { left: 245px; --b: 471px; font-size: 19px; color: #8fcfa8; }
.w-barley { left: 352px; --b: 475px; font-size: 21.500px; color: #90d888; }
.w-guar { left: 418px; --b: 475px; font-size: 12.500px; color: #5f8fb5; }
.w-niger { left: 244px; --b: 495px; font-size: 14.600px; color: #fba0a8; }
.w-oilseeds { left: 325px; --b: 494px; font-size: 10.800px; color: #a888a8; }
.w-cashew { left: 400px; --b: 495px; font-size: 11.800px; color: #50a0a8; }
.w-ginger { left: 168px; --b: 505px; font-size: 19px; color: #c8d888; }
.w-cowpea { left: 31px; --b: 513px; font-size: 12px; color: #d4d490; }
.w-oiltotal { left: 300px; --b: 510px; font-size: 7.600px; color: #8a7a8a; }
.w-mesta { left: 370px; --b: 513px; font-size: 13px; color: #5f9fb0; }

/* sheet tabs */
.tabs {
    height: 29px;
    display: flex;
    flex: none;
    background: #e8e8e8;
    border-top: 1px solid #d8d8d8;
    border-bottom: 1px solid #d0d0d0;
    font-size: 11.500px;
    color: #666;
}
.tab {
    display: flex;
    align-items: center;
    justify-content: center;
    gap: 5px;
    border-right: 1px solid #d0d0d0;
    flex: none;
    white-space: nowrap;
}
.tab-source { width: 131px; justify-content: flex-start; padding-left: 7px; }
.tab-gap { width: 11px; }
.w62 { width: 62px; }
.w102 { width: 102px; }
.w104 { width: 104px; }
.w105 { width: 105px; }
.w70 { width: 70px; }
.w73 { width: 73px; }
.w63 { width: 63px; }
.w32 { width: 32px; }
.wrest { width: 32px; border-right: 0; }
.tab-active {
    width: 103px;
    background: #fff;
    font-weight: 600;
    color: #555;
}
.tab-ic {
    width: 13px;
    height: 13px;
    flex: none;
}
.add-ic {
    width: 18px;
    height: 18px;
}

/* status */
.statusbar {
    height: 21px;
    background: #ececec;
    display: flex;
    flex: none;
}
.st {
    border-right: 1px solid #d8d8d8;
    flex: none;
}
.st1000 { width: 1000px; }
.st126 { width: 126px; }
.st27 { width: 27px; }
.st52 { width: 52px; }
.st66 { width: 66px; }
.pager {
    display: flex;
    align-items: center;
    justify-content: center;
    gap: 6px;
}
.pager svg {
    width: 10px;
    height: 10px;
}
.views {
    display: flex;
    align-items: center;
    gap: 9px;
    padding-left: 8px;
}
.views svg {
    width: 12px;
    height: 12px;
}

/* windows taskbar */
.taskbar {
    height: 40px;
    background: #1b171f;
    display: flex;
    align-items: stretch;
    flex: none;
    color: #fff;
}
.start {
    width: 48px;
    display: flex;
    align-items: center;
    justify-content: center;
    background: #14131a;
}
.search {
    width: 287px;
    background: #f3f3f3;
    border: 1px solid #b5b5b5;
    border-bottom: 0;
    color: #222;
    display: flex;
    align-items: center;
    padding-left: 12px;
    font-size: 14px;
    position: relative;
    overflow: hidden;
}
.search span {
    margin-left: 10px;
}
.dragon {
    position: absolute;
    left: 212px;
    top: 0;
    width: 74px;
    height: 40px;
}
.task-icons {
    display: flex;
    align-items: stretch;
}
.task {
    width: 49px;
    display: flex;
    align-items: center;
    justify-content: center;
    position: relative;
}
.t-view {
    width: 50px;
}
.open::after {
    content: "";
    position: absolute;
    left: 1px;
    right: 1px;
    bottom: 0;
    height: 2px;
    background: #76b9ed;
}
.tableau {
    width: 46px;
    margin-left: 3px;
    background: #3b373e;
}
.tableau svg {
    background: #fff;
    padding: 2px;
    width: 24px;
    height: 24px;
}
.doc-a {
    font: 700 11px "Liberation Serif", serif;
    fill: #e07b2c;
}
.tray {
    flex: 1;
    display: flex;
    align-items: center;
    font-size: 14px;
    position: relative;
    white-space: nowrap;
}
.weather {
    margin-left: 183px;
}
.temp {
    margin-left: 6px;
}
.cond {
    margin-left: 9px;
    font-size: 13.500px;
}
.tr-up {
    margin-left: 22px;
}
.tr-meet {
    margin-left: 11px;
}
.tr-bat {
    margin-left: 9px;
}
.tr-wifi {
    margin-left: 9px;
}
.tr-vol {
    margin-left: 6px;
}
.lang {
    margin-left: 11px;
    font-size: 12px;
}
.clock {
    width: 72px;
    margin-left: 1px;
    display: flex;
    flex-direction: column;
    align-items: center;
    font-size: 11px;
    line-height: 18px;
}
.notif {
    position: relative;
    margin-left: 10px;
    display: flex;
}
.badge {
    position: absolute;
    left: 8px;
    top: 8px;
    width: 16px;
    height: 16px;
    border-radius: 50%;
    background: #222;
    border: 1px solid #aaa;
    font-size: 10px;
    text-align: center;
    line-height: 14px;
}
```
